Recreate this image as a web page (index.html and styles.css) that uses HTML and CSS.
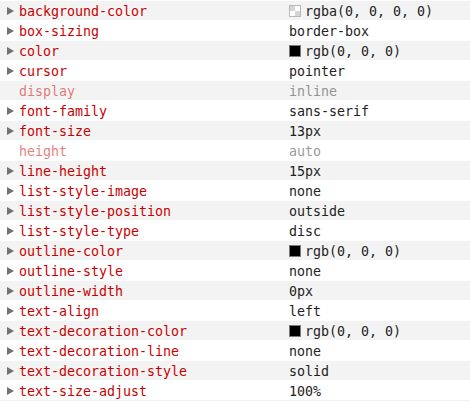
FILE: index.html
```html
<!DOCTYPE html>
<html>
<head>
<meta charset="utf-8">
<link rel="stylesheet" href="styles.css">
</head>
<body>
<div class="list">
  <div class="row"><span class="tri"></span><span class="name">background-color</span><span class="value"><span class="swatch transparent"></span>rgba(0, 0, 0, 0)</span></div>
  <div class="row"><span class="tri"></span><span class="name">box-sizing</span><span class="value">border-box</span></div>
  <div class="row"><span class="tri"></span><span class="name">color</span><span class="value"><span class="swatch black"></span>rgb(0, 0, 0)</span></div>
  <div class="row"><span class="tri"></span><span class="name">cursor</span><span class="value">pointer</span></div>
  <div class="row inherited"><span class="tri none"></span><span class="name">display</span><span class="value">inline</span></div>
  <div class="row"><span class="tri"></span><span class="name">font-family</span><span class="value">sans-serif</span></div>
  <div class="row"><span class="tri"></span><span class="name">font-size</span><span class="value">13px</span></div>
  <div class="row inherited"><span class="tri none"></span><span class="name">height</span><span class="value">auto</span></div>
  <div class="row"><span class="tri"></span><span class="name">line-height</span><span class="value">15px</span></div>
  <div class="row"><span class="tri"></span><span class="name">list-style-image</span><span class="value">none</span></div>
  <div class="row"><span class="tri"></span><span class="name">list-style-position</span><span class="value">outside</span></div>
  <div class="row"><span class="tri"></span><span class="name">list-style-type</span><span class="value">disc</span></div>
  <div class="row"><span class="tri"></span><span class="name">outline-color</span><span class="value"><span class="swatch black"></span>rgb(0, 0, 0)</span></div>
  <div class="row"><span class="tri"></span><span class="name">outline-style</span><span class="value">none</span></div>
  <div class="row"><span class="tri"></span><span class="name">outline-width</span><span class="value">0px</span></div>
  <div class="row"><span class="tri"></span><span class="name">text-align</span><span class="value">left</span></div>
  <div class="row"><span class="tri"></span><span class="name">text-decoration-color</span><span class="value"><span class="swatch black"></span>rgb(0, 0, 0)</span></div>
  <div class="row"><span class="tri"></span><span class="name">text-decoration-line</span><span class="value">none</span></div>
  <div class="row"><span class="tri"></span><span class="name">text-decoration-style</span><span class="value">solid</span></div>
  <div class="row"><span class="tri"></span><span class="name">text-size-adjust</span><span class="value">100%</span></div>
</div>
</body>
</html>
```

FILE: styles.css
```css
html, body {
  margin: 0;
  padding: 0;
  background: #ffffff;
}
.list {
  font-family: "DejaVu Sans Mono", "Liberation Mono", monospace;
  font-size: 13.3px;
  display: flex;
  flex-direction: column;
  border-bottom: 1px solid #f0f0f0;
}
.row {
  display: flex;
  align-items: center;
  box-sizing: border-box;
  height: 20px;
  border-top: 1px solid #ffffff;
  padding-top: 1px;
}
.row:nth-child(odd) {
  background: #f3f3f3;
}
.tri {
  width: 0;
  height: 0;
  margin-left: 7px;
  margin-right: 5px;
  border-top: 4.5px solid transparent;
  border-bottom: 4.5px solid transparent;
  border-left: 7px solid #727272;
}
.tri.none {
  border-left-color: transparent;
}
.name {
  width: 270px;
  color: #c80000;
  white-space: nowrap;
}
.value {
  display: flex;
  align-items: center;
  color: #222222;
  white-space: nowrap;
}
.inherited .name,
.inherited .value {
  opacity: 0.5;
}
.inherited .value {
  color: #333333;
}
.swatch {
  width: 10px;
  height: 10px;
  margin-right: 4px;
  border: 1px solid #999999;
}
.swatch.black {
  background: #000000;
  border-color: #7a7a7a;
}
.swatch.transparent {
  border-color: #b8b8b8;
  background:
    linear-gradient(#d4d4d4, #d4d4d4) 0 0 / 5px 5px no-repeat,
    linear-gradient(#d4d4d4, #d4d4d4) 5px 5px / 5px 5px no-repeat,
    #ffffff;
}
```
